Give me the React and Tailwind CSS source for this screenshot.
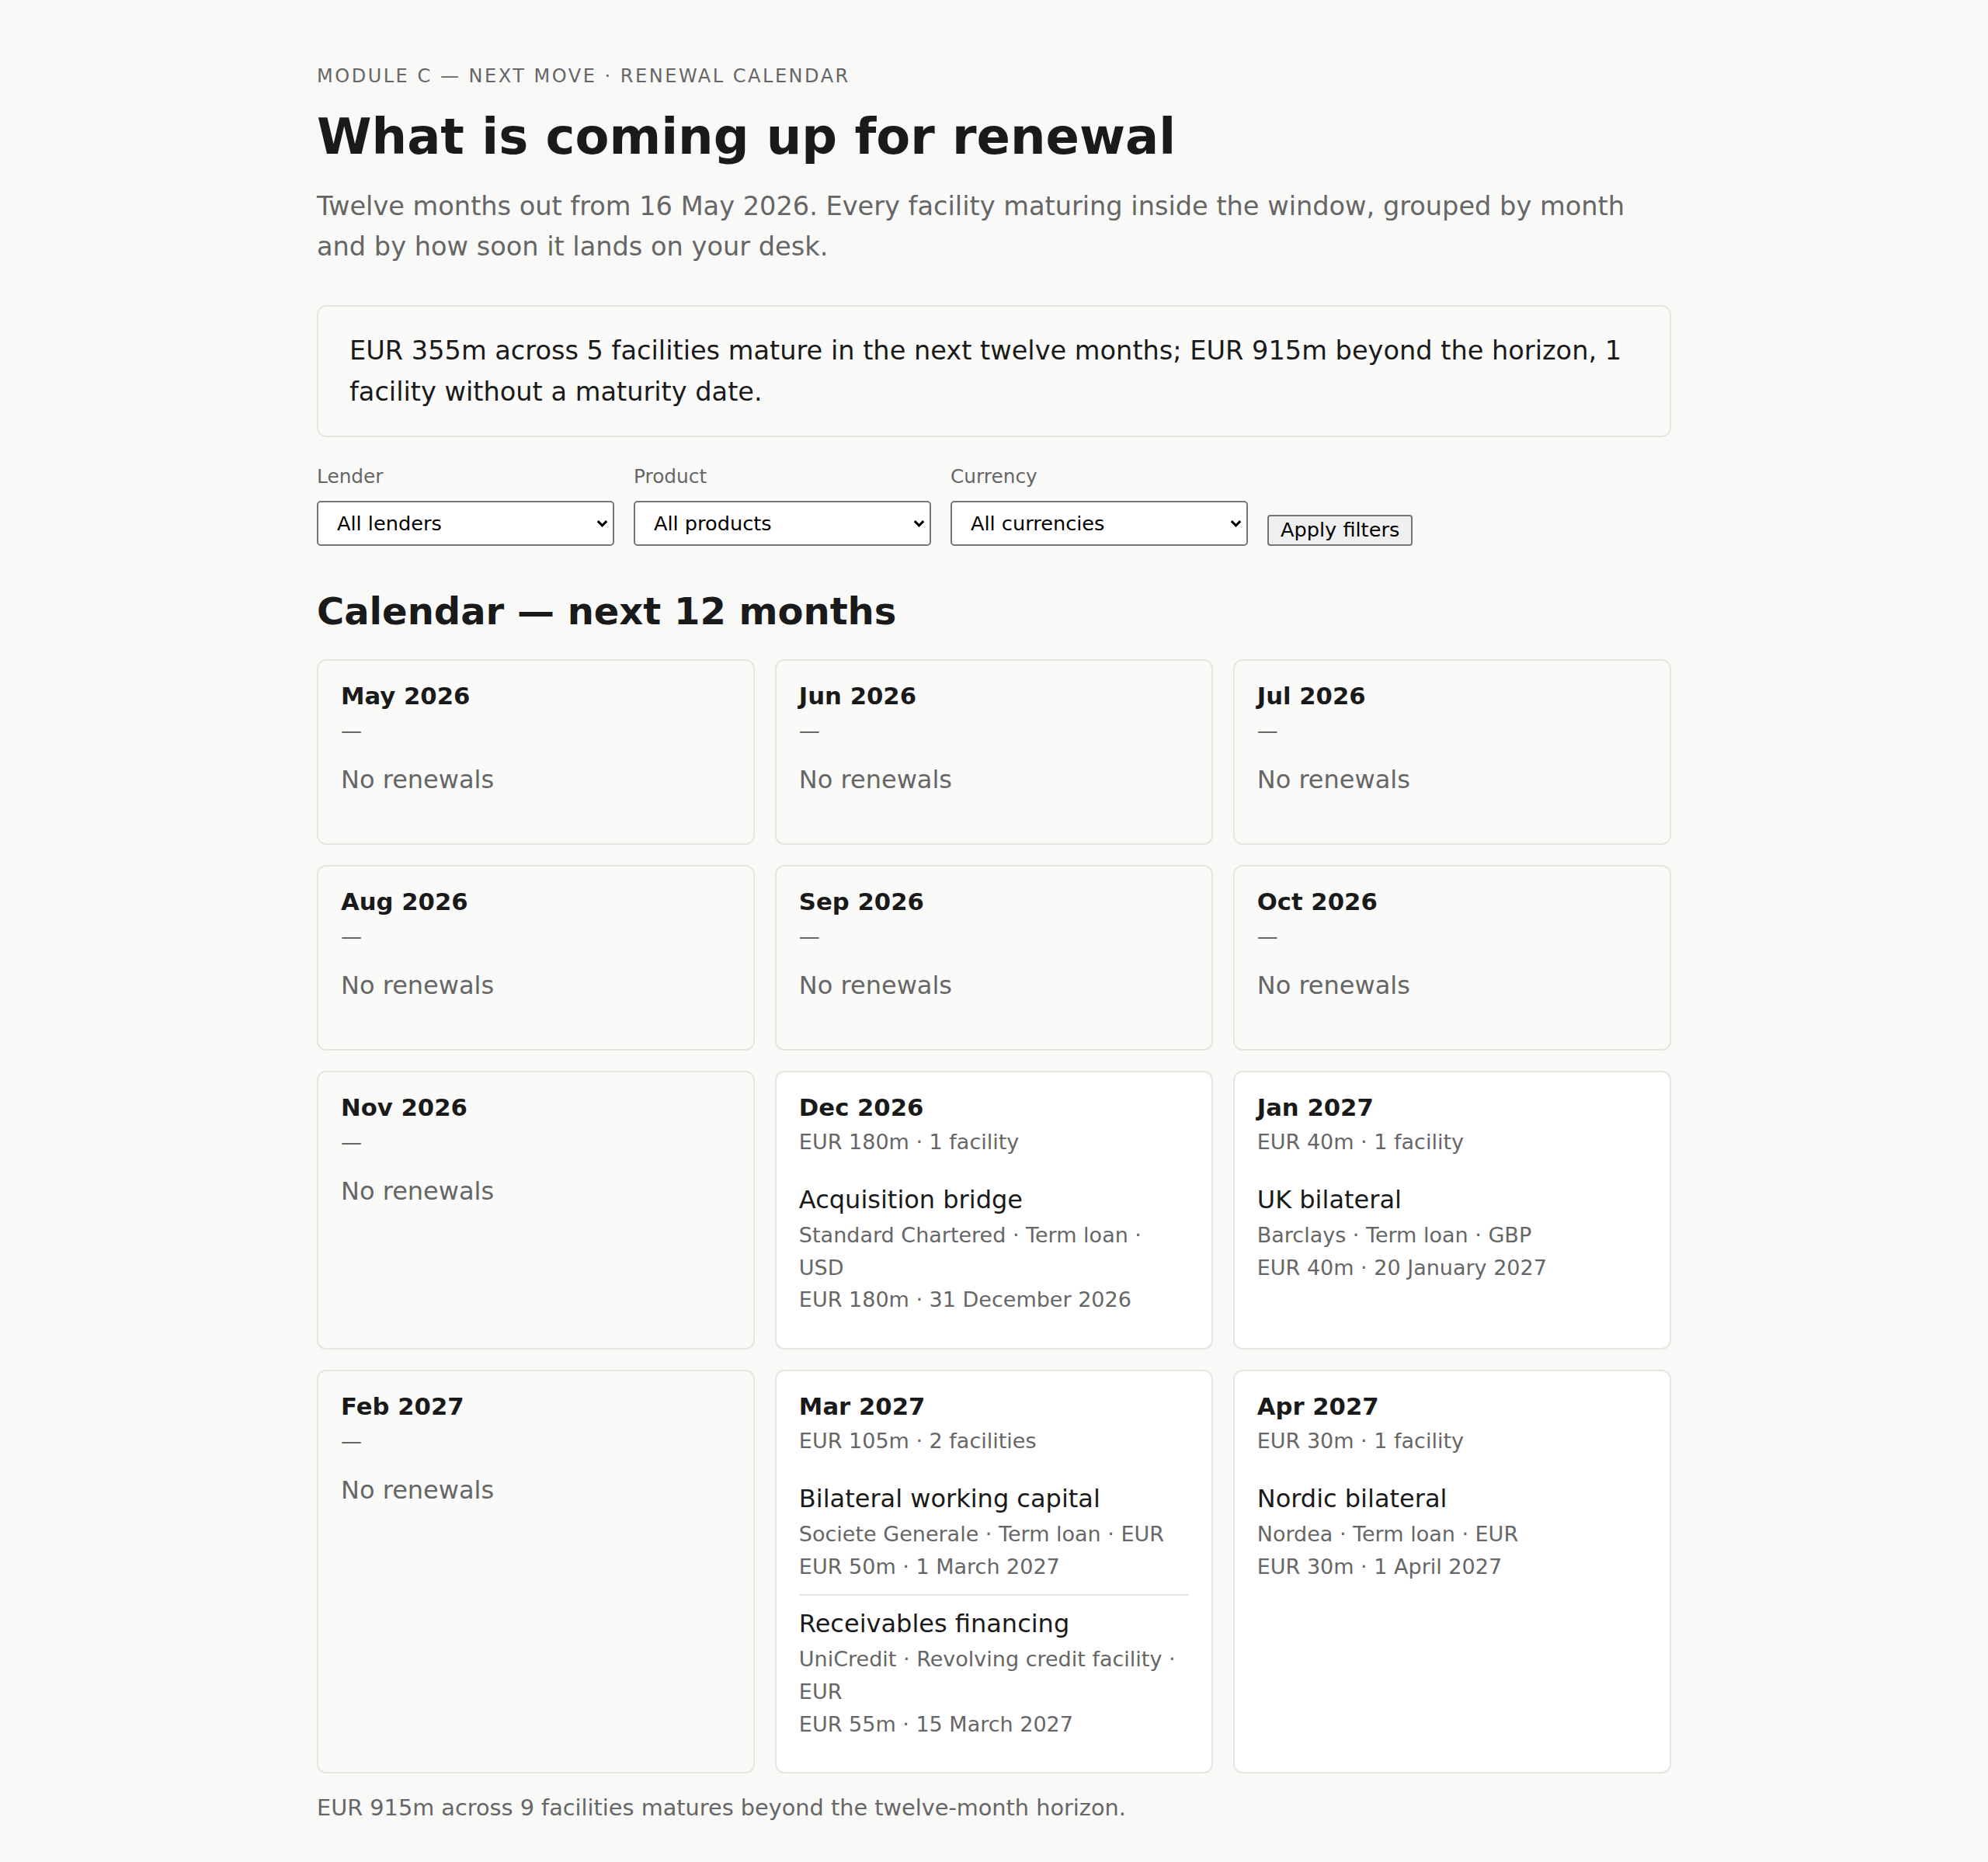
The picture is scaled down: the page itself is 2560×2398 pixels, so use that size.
import React from "react";

// Months in the twelve-month window, with any facilities that mature in them.
const MONTHS = [
  { label: "May 2026", facilities: [] },
  { label: "Jun 2026", facilities: [] },
  { label: "Jul 2026", facilities: [] },
  { label: "Aug 2026", facilities: [] },
  { label: "Sep 2026", facilities: [] },
  { label: "Oct 2026", facilities: [] },
  { label: "Nov 2026", facilities: [] },
  {
    label: "Dec 2026",
    total: "EUR 180m · 1 facility",
    facilities: [
      {
        name: "Acquisition bridge",
        terms: "Standard Chartered · Term loan · USD",
        maturity: "EUR 180m · 31 December 2026",
      },
    ],
  },
  {
    label: "Jan 2027",
    total: "EUR 40m · 1 facility",
    facilities: [
      {
        name: "UK bilateral",
        terms: "Barclays · Term loan · GBP",
        maturity: "EUR 40m · 20 January 2027",
      },
    ],
  },
  { label: "Feb 2027", facilities: [] },
  {
    label: "Mar 2027",
    total: "EUR 105m · 2 facilities",
    facilities: [
      {
        name: "Bilateral working capital",
        terms: "Societe Generale · Term loan · EUR",
        maturity: "EUR 50m · 1 March 2027",
      },
      {
        name: "Receivables financing",
        terms: "UniCredit · Revolving credit facility · EUR",
        maturity: "EUR 55m · 15 March 2027",
      },
    ],
  },
  {
    label: "Apr 2027",
    total: "EUR 30m · 1 facility",
    facilities: [
      {
        name: "Nordic bilateral",
        terms: "Nordea · Term loan · EUR",
        maturity: "EUR 30m · 1 April 2027",
      },
    ],
  },
];

const FILTERS = [
  { id: "lender", label: "Lender", placeholder: "All lenders" },
  { id: "product", label: "Product", placeholder: "All products" },
  { id: "currency", label: "Currency", placeholder: "All currencies" },
];

function Chevron() {
  return (
    <svg
      width="15"
      height="11"
      viewBox="0 0 15 11"
      fill="none"
      className="pointer-events-none absolute right-[8px] top-1/2 -translate-y-1/2"
      aria-hidden="true"
    >
      <path
        d="M1.8 2.6 L7.5 8.4 L13.2 2.6"
        stroke="#000000"
        strokeWidth="3"
        strokeLinejoin="miter"
      />
    </svg>
  );
}

function FilterField({ id, label, placeholder }) {
  return (
    <div className="flex w-[383px] flex-col">
      <label
        htmlFor={id}
        className="mb-[12.8px] block text-[24.8px] leading-[37px] text-[#666666]"
      >
        {label}
      </label>
      <div className="relative">
        <select
          id={id}
          defaultValue=""
          className="h-[58px] w-full appearance-none rounded-[5px] border-2 border-[#767676] bg-white pl-[24px] pr-[30px] text-[25.6px] text-black"
        >
          <option value="">{placeholder}</option>
        </select>
        <Chevron />
      </div>
    </div>
  );
}

function Facility({ facility, first }) {
  return (
    <li
      className={
        first
          ? "pt-[16px] pb-[15px]"
          : "border-t-2 border-[#e8e5df] pt-[11px] pb-[15px]"
      }
    >
      <div className="text-[32px] leading-[50px] text-[#1a1a1a]">
        {facility.name}
      </div>
      <div className="text-[27px] leading-[41.6px] text-[#666666]">
        {facility.terms}
      </div>
      <div className="text-[27px] leading-[41.6px] text-[#666666]">
        {facility.maturity}
      </div>
    </li>
  );
}

function MonthCard({ month }) {
  const empty = month.facilities.length === 0;
  return (
    <div
      className={
        "min-h-[239px] rounded-[12px] border-2 border-[#e8e5df] px-[29px] pt-[26px] pb-[26px] " +
        (empty ? "bg-[#fafaf9]" : "bg-white")
      }
    >
      <h3 className="text-[30.7px] font-bold leading-[40px] text-[#1a1a1a]">
        {month.label}
      </h3>
      <div className="mt-[3px] text-[27px] leading-[41.6px] text-[#666666]">
        {empty ? "—" : month.total}
      </div>
      {empty ? (
        <p className="mt-[17.5px] text-[32px] leading-[51.2px] text-[#666666]">
          No renewals
        </p>
      ) : (
        <ul className="mt-[13px]">
          {month.facilities.map((f, i) => (
            <Facility key={f.name} facility={f} first={i === 0} />
          ))}
        </ul>
      )}
    </div>
  );
}

export default function App() {
  return (
    <div className="min-h-screen bg-[#f9f9f7] font-['DejaVu_Sans',sans-serif] text-[#1a1a1a]">
      <main className="mx-auto w-[1744px] pt-[80px] pb-[50px]">
        <p className="text-[24px] leading-[36px] tracking-[0.105em] text-[#666666]">
          MODULE C — NEXT MOVE · RENEWAL CALENDAR
        </p>
        <h1 className="mt-[22px] text-[64px] font-bold leading-[77px] text-[#1a1a1a]">
          What is coming up for renewal
        </h1>
        <p className="mt-[25px] text-[33.6px] leading-[52px] text-[#666666]">
          Twelve months out from 16 May 2026. Every facility maturing inside the
          window, grouped by month and by how soon it lands on your desk.
        </p>

        <div className="mt-[49px] rounded-[12px] border-2 border-[#e8e5df] bg-[#fafaf9] px-[40px] py-[30px] text-[33.6px] leading-[53px] text-[#1a1a1a]">
          EUR 355m across 5 facilities mature in the next twelve months; EUR
          915m beyond the horizon, 1 facility without a maturity date.
        </div>

        <form
          className="mt-[32px] flex items-end gap-[25px]"
          onSubmit={(e) => e.preventDefault()}
        >
          {FILTERS.map((f) => (
            <FilterField key={f.id} {...f} />
          ))}
          <button
            type="submit"
            className="h-[40px] rounded-[4px] border-2 border-[#767676] bg-[#efefef] px-[15px] text-[25.6px] leading-none text-black"
          >
            Apply filters
          </button>
        </form>

        <h2 className="mt-[56px] text-[48px] font-bold leading-[57.6px] text-[#1a1a1a]">
          Calendar — next 12 months
        </h2>

        <div className="mt-[33px] grid grid-cols-3 gap-[25.6px]">
          {MONTHS.map((m) => (
            <MonthCard key={m.label} month={m} />
          ))}
        </div>

        <p className="mt-[21px] text-[28.75px] leading-[46px] text-[#666666]">
          EUR 915m across 9 facilities matures beyond the twelve-month horizon.
        </p>
      </main>
    </div>
  );
}
